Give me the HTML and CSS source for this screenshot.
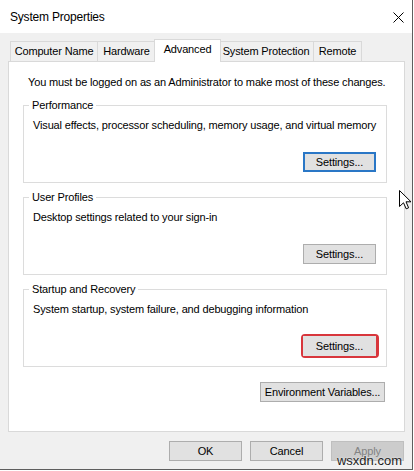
FILE: index.html
```html
<!DOCTYPE html>
<html lang="en">
<head>
<meta charset="utf-8">
<title>System Properties</title>
<link rel="stylesheet" href="styles.css">
</head>
<body>
<div class="window">
  <header class="titlebar">
    <span class="title">System Properties</span>
    <svg class="close" width="11" height="11" viewBox="0 0 11 11" aria-label="Close">
      <path d="M0.5 0.5 L10.5 10.5 M10.5 0.5 L0.5 10.5" stroke="#000" stroke-width="1" fill="none"/>
    </svg>
  </header>

  <div class="client">
    <nav class="tabs">
      <span class="tab tab-computer">Computer Name</span>
      <span class="tab tab-hardware">Hardware</span>
      <span class="tab tab-active">Advanced</span>
      <span class="tab tab-protection">System Protection</span>
      <span class="tab tab-remote">Remote</span>
    </nav>

    <section class="panel">
      <p class="note">You must be logged on as an Administrator to make most of these changes.</p>

      <fieldset class="group">
        <legend>Performance</legend>
        <p class="desc">Visual effects, processor scheduling, memory usage, and virtual memory</p>
        <div class="actions">
          <button class="btn btn-focus">Settings...</button>
        </div>
      </fieldset>

      <fieldset class="group">
        <legend>User Profiles</legend>
        <p class="desc">Desktop settings related to your sign-in</p>
        <div class="actions">
          <button class="btn">Settings...</button>
        </div>
      </fieldset>

      <fieldset class="group">
        <legend>Startup and Recovery</legend>
        <p class="desc">System startup, system failure, and debugging information</p>
        <div class="actions">
          <span class="highlight"><button class="btn">Settings...</button></span>
        </div>
      </fieldset>

      <div class="actions env">
        <button class="btn btn-wide">Environment Variables...</button>
      </div>
    </section>

    <footer class="dialog-buttons">
      <button class="btn btn-dialog">OK</button>
      <button class="btn btn-dialog">Cancel</button>
      <button class="btn btn-dialog" disabled>Apply</button>
    </footer>
  </div>

  <span class="watermark">wsxdn.com</span>

  <!-- mouse pointer resting on the window edge -->
  <svg class="pointer" width="13" height="20" viewBox="0 0 13 20">
    <path d="M0.5 0.5 L0.5 16.5 L4.5 12.8 L7.2 18.8 L9.6 17.8 L7 11.8 L12 11.8 Z" fill="#fff" stroke="#000" stroke-width="1" stroke-linejoin="miter"/>
  </svg>
</div>
</body>
</html>
```

FILE: styles.css
```css
html, body {
  margin: 0;
  background: #ffffff;
}

body {
  font-family: "Liberation Sans", Arial, sans-serif;
  font-size: 11px;
  letter-spacing: -0.15px;
  color: #000;
}

p { margin: 0; }

/* dialog frame */
.window {
  position: relative;
  width: 412px;
  height: 469px;
  background: #f0f0f0;
  border-right: 1px solid #5e5e5e;
  border-bottom: 1px solid #5e5e5e;
  display: flex;
  flex-direction: column;
}

.titlebar {
  height: 33px;
  flex: 0 0 33px;
  box-sizing: border-box;
  background: #ffffff;
  display: flex;
  align-items: center;
  justify-content: space-between;
  padding: 1px 8px 0 10px;
}

.title {
  font-size: 12px;
  letter-spacing: -0.2px;
  line-height: 15px;
}

.close {
  display: block;
}

.client {
  flex: 1;
  display: flex;
  flex-direction: column;
  padding: 6px 0 0 8px;
}

/* tab strip */
.tabs {
  display: flex;
  align-items: flex-end;
  height: 22px;
  margin-left: 2px;
  position: relative;
  z-index: 1;
}

.tab {
  box-sizing: border-box;
  height: 20px;
  line-height: 18px;
  padding: 0;
  text-align: center;
  border: 1px solid #d9d9d9;
  border-bottom: none;
  background: #f0f0f0;
  margin-left: -1px;
  white-space: nowrap;
}

.tab:first-child {
  margin-left: 0;
}

.tab-computer { width: 88px; }
.tab-hardware { width: 59px; }
.tab-protection { width: 96px; }
.tab-remote { width: 49px; }

.tab-active {
  width: 67px;
  height: 23px;
  margin-bottom: -1px;
  margin-right: -2px;
  margin-left: -2px;
  line-height: 19px;
  background: #ffffff;
  position: relative;
}

/* page body */
.panel {
  box-sizing: border-box;
  width: 397px;
  height: 371px;
  background: #ffffff;
  border: 1px solid #d9d9d9;
  padding: 13px 17px 0 14px;
}

.note {
  line-height: 15px;
  margin: 0 0 8px 5px;
  white-space: nowrap;
}

.group {
  margin: 0;
  min-width: 0;
  border: 1px solid #dcdcdc;
  padding: 0 10px 10px 9px;
}

.group + .group {
  margin-top: 7px;
}

.group legend {
  line-height: 15px;
  padding: 0 3px;
  margin-left: -4px;
}

.desc {
  line-height: 15px;
  margin-top: 5px;
  white-space: nowrap;
}

.actions {
  display: flex;
  justify-content: flex-end;
  margin-top: 19px;
}

.actions.env {
  margin-top: 15px;
  padding-right: 2px;
}

/* push buttons */
.btn {
  box-sizing: border-box;
  height: 20px;
  width: 73px;
  padding: 0;
  font: inherit;
  letter-spacing: inherit;
  color: #000;
  background: #e1e1e1;
  border: 1px solid #adadad;
  border-radius: 0;
  text-align: center;
  line-height: 17px;
  white-space: nowrap;
}

.btn-focus {
  border-color: #2a77c6;
  box-shadow: inset 0 0 0 1px #2a77c6;
}

.btn-wide {
  width: 125px;
}

.btn[disabled] {
  background: #cccccc;
  border-color: #bfbfbf;
  color: #838383;
}

.highlight {
  display: flex;
  margin: -2px -3px -2px 0;
  border: 3px solid #d8363c;
  border-left-width: 2px;
  border-top-width: 2px;
  border-bottom-width: 2px;
  border-radius: 4px;
  padding: 0;
}

.highlight .btn {
  border-color: #e1e1e1;
}

.dialog-buttons {
  display: flex;
  justify-content: flex-end;
  gap: 8px;
  margin-top: 9px;
  padding-right: 8px;
}

/* overlays */
.watermark {
  position: absolute;
  right: 10px;
  bottom: 1px;
  font-size: 13px;
  letter-spacing: 0;
  line-height: 15px;
  color: #1e1e1e;
  text-shadow: 0 0 2px #ffffff;
}

.pointer {
  position: absolute;
  left: 399px;
  top: 190px;
  display: block;
}
```
